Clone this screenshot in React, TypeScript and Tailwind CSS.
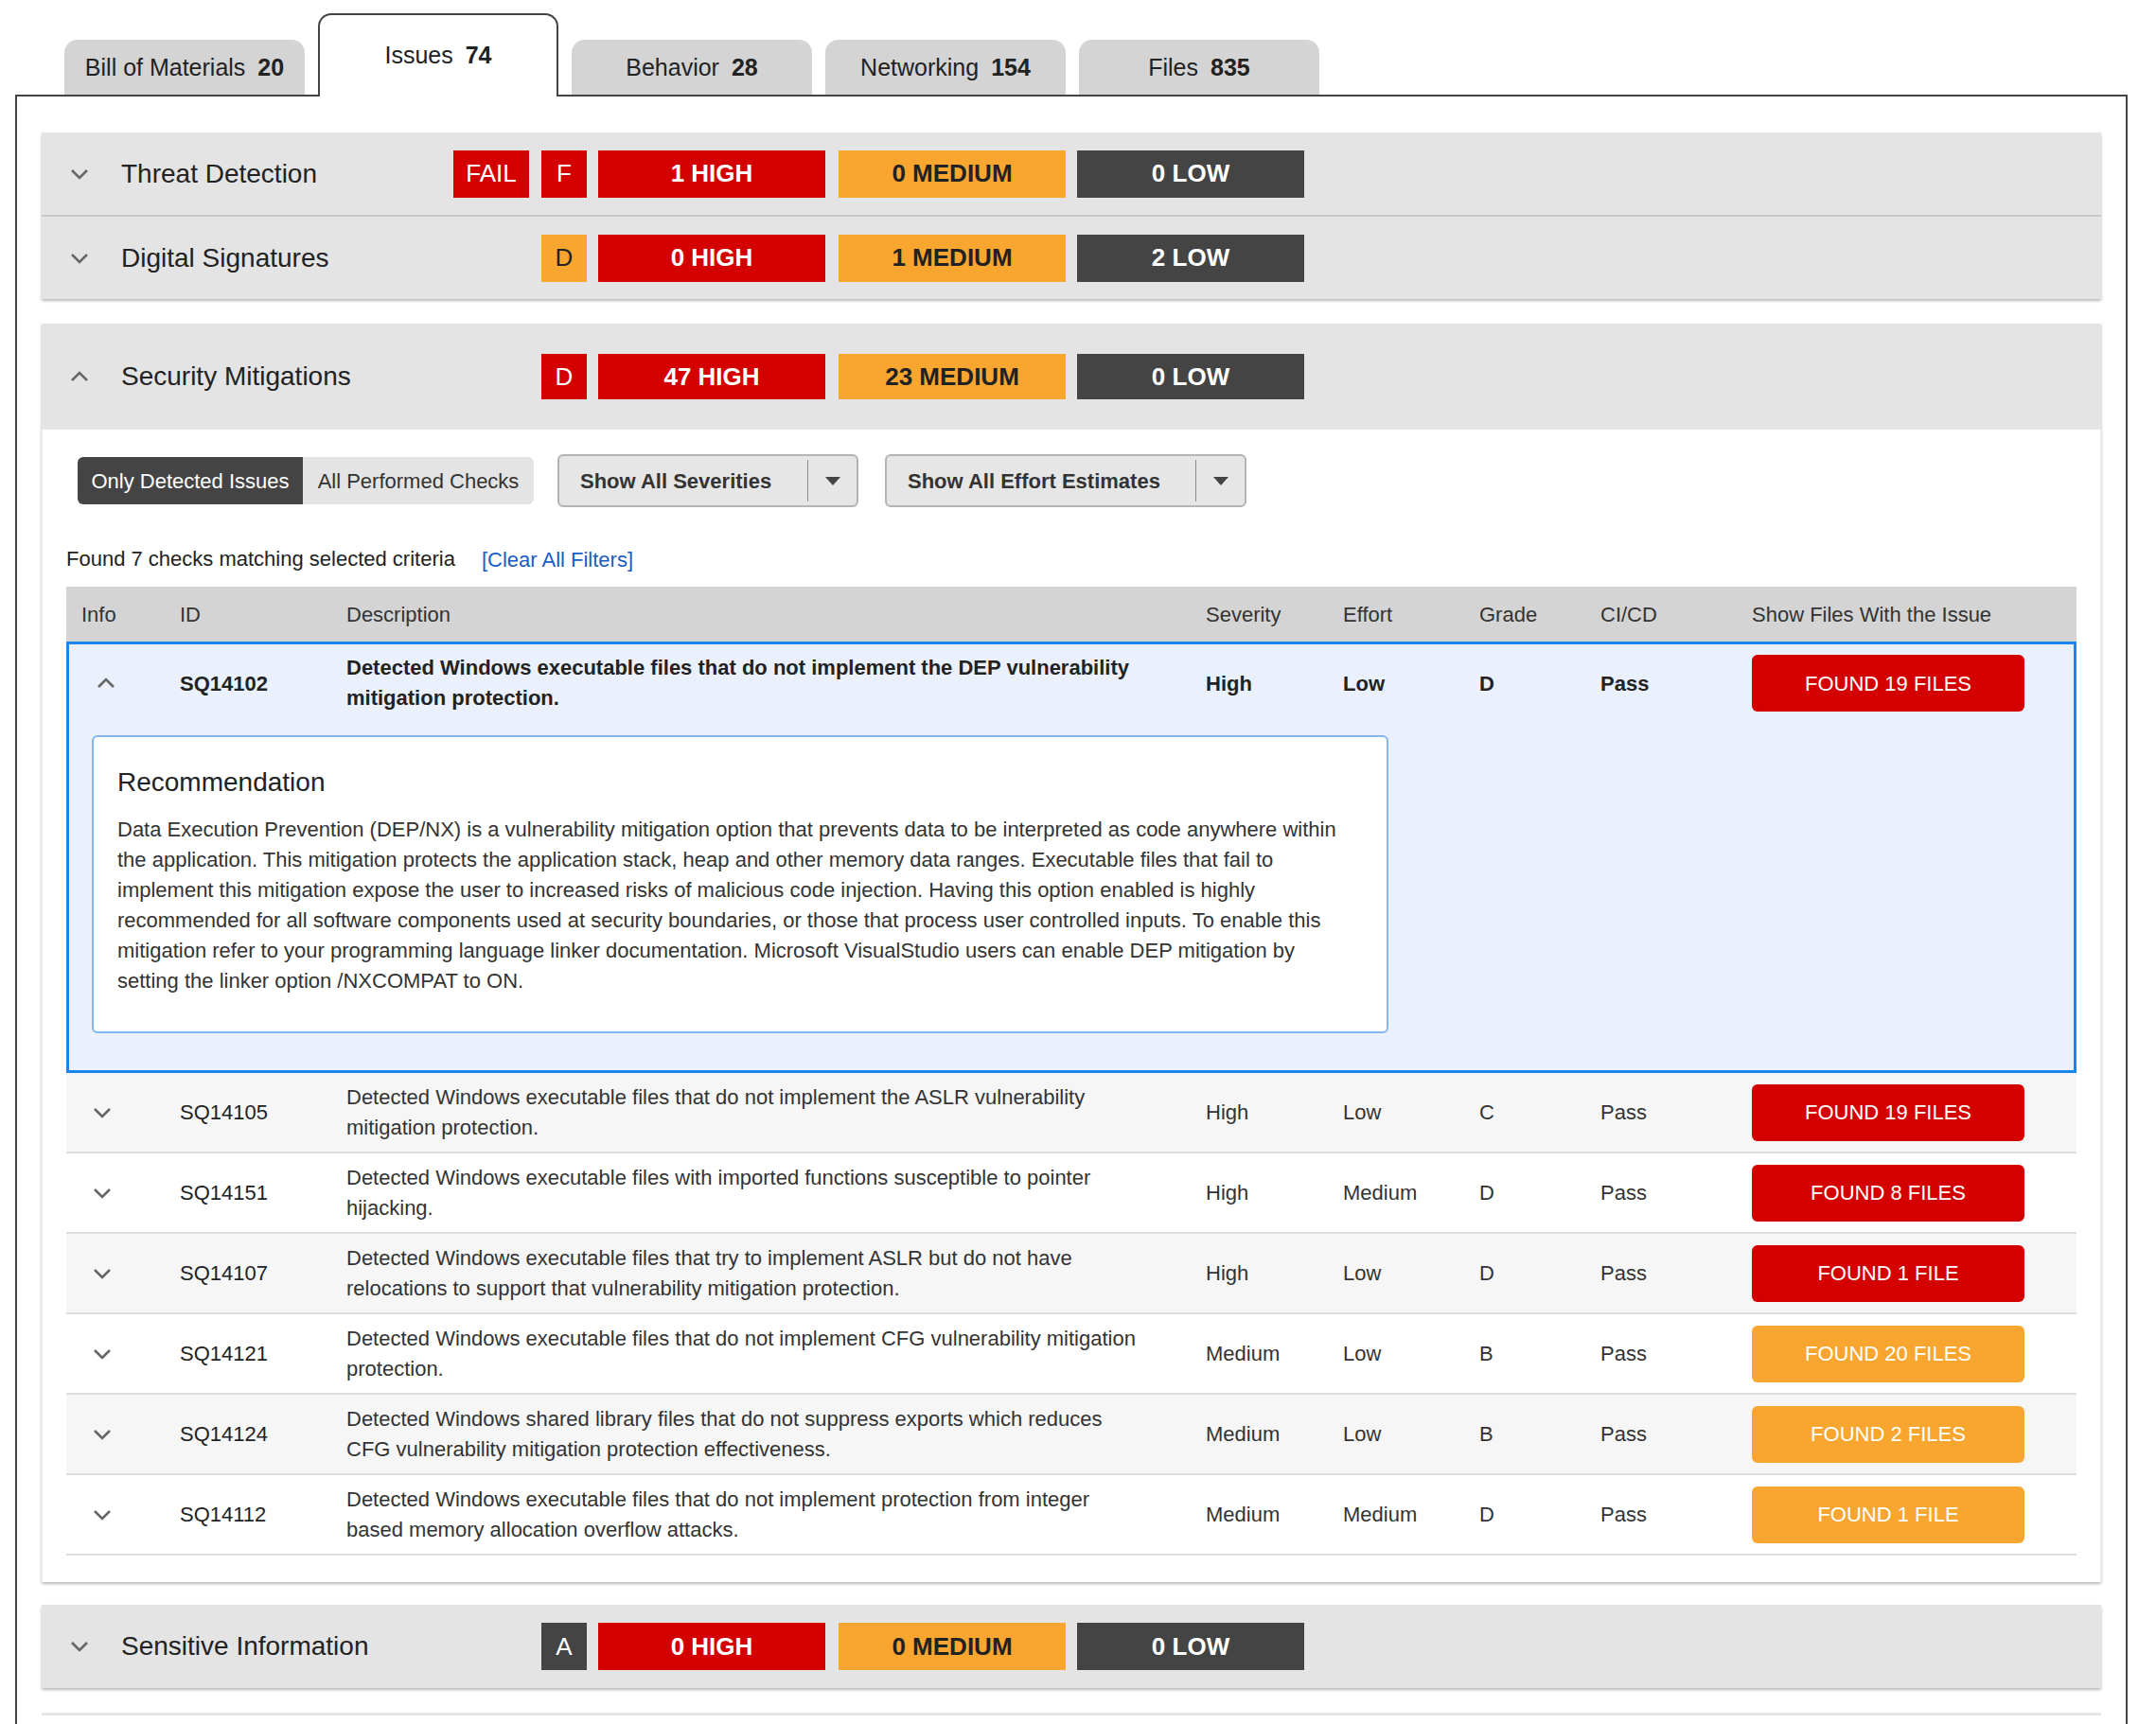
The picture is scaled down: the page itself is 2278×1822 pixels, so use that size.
import React from 'react';

const RED = 'bg-[#d40000]';
const ORANGE = 'bg-[#f9a630]';

type Row = {
  id: string;
  desc: string;
  sev: string;
  effort: string;
  grade: string;
  files: string;
  tone: 'red' | 'orange';
};

const ROWS: Row[] = [
  { id: 'SQ14105', desc: 'Detected Windows executable files that do not implement the ASLR vulnerability mitigation protection.', sev: 'High', effort: 'Low', grade: 'C', files: 'FOUND 19 FILES', tone: 'red' },
  { id: 'SQ14151', desc: 'Detected Windows executable files with imported functions susceptible to pointer hijacking.', sev: 'High', effort: 'Medium', grade: 'D', files: 'FOUND 8 FILES', tone: 'red' },
  { id: 'SQ14107', desc: 'Detected Windows executable files that try to implement ASLR but do not have relocations to support that vulnerability mitigation protection.', sev: 'High', effort: 'Low', grade: 'D', files: 'FOUND 1 FILE', tone: 'red' },
  { id: 'SQ14121', desc: 'Detected Windows executable files that do not implement CFG vulnerability mitigation protection.', sev: 'Medium', effort: 'Low', grade: 'B', files: 'FOUND 20 FILES', tone: 'orange' },
  { id: 'SQ14124', desc: 'Detected Windows shared library files that do not suppress exports which reduces CFG vulnerability mitigation protection effectiveness.', sev: 'Medium', effort: 'Low', grade: 'B', files: 'FOUND 2 FILES', tone: 'orange' },
  { id: 'SQ14112', desc: 'Detected Windows executable files that do not implement protection from integer based memory allocation overflow attacks.', sev: 'Medium', effort: 'Medium', grade: 'D', files: 'FOUND 1 FILE', tone: 'orange' },
];

const GRID = 'grid grid-cols-[104px_176px_908px_145px_144px_128px_160px_1fr]';

function Chevron({ up = false }: { up?: boolean }) {
  return (
    <svg width="20" height="12" viewBox="0 0 20 12" fill="none" stroke="#666" strokeWidth={2.6}>
      {up ? <path d="M2 10 L10 2 L18 10" /> : <path d="M2 2 L10 10 L18 2" />}
    </svg>
  );
}

function Tab({ label, count, active }: { label: string; count: number; active?: boolean }) {
  if (active) {
    return (
      <div className="relative z-10 -mb-[2px] flex h-[88px] w-[254px] items-start justify-center rounded-t-[14px] border-2 border-b-0 border-[#444] bg-white pt-[27px] text-[25px] leading-[30px] text-[#222]">
        <span>{label}</span>
        <b className="ml-[13px]">{count}</b>
      </div>
    );
  }
  return (
    <div className="flex h-[58px] w-[254px] items-center justify-center rounded-t-[14px] bg-[#d4d4d4] text-[25px] leading-[30px] text-[#222]">
      <span>{label}</span>
      <b className="ml-[13px]">{count}</b>
    </div>
  );
}

function Badge({ w, className, children }: { w: string; className: string; children: React.ReactNode }) {
  return <div className={`flex h-full items-center justify-center text-[26px] ${w} ${className}`}>{children}</div>;
}

function SectionHeader({ title, up, fail, grade, gradeTone, high, medium, low, h, badgeH }: {
  title: string; up?: boolean; fail?: boolean; grade: string; gradeTone: string;
  high: number; medium: number; low: number; h: string; badgeH: string;
}) {
  return (
    <div className={`flex items-center ${h}`}>
      <div className="w-[84px] pl-[30px]"><Chevron up={up} /></div>
      <div className="w-[342px] text-[28px] text-[#222]">{title}</div>
      <div className={`flex w-[150px] justify-end gap-[13px] ${badgeH}`}>
        {fail && <Badge w="w-[80px]" className={`${RED} text-white`}>FAIL</Badge>}
        <Badge w="w-[48px]" className={gradeTone}>{grade}</Badge>
      </div>
      <div className={`ml-[12px] flex ${badgeH}`}>
        <Badge w="w-[240px]" className={`${RED} font-bold text-white`}>{high} HIGH</Badge>
        <Badge w="ml-[14px] w-[240px]" className={`${ORANGE} font-bold text-[#222]`}>{medium} MEDIUM</Badge>
        <Badge w="ml-[12px] w-[240px]" className="bg-[#444] font-bold text-white">{low} LOW</Badge>
      </div>
    </div>
  );
}

function Dropdown({ label, w }: { label: string; w: string }) {
  return (
    <div className={`flex h-[56px] items-stretch rounded-[6px] border-2 border-[#b4b4b4] bg-[#e6e6e6] ${w}`}>
      <div className="flex flex-1 items-center pl-[22px] text-[22px] font-bold text-[#333]">{label}</div>
      <div className="my-[4px] w-[1px] bg-[#8a8a8a]" />
      <div className="flex w-[51px] items-center justify-center">
        <div className="h-0 w-0 border-x-[8px] border-t-[9px] border-x-transparent border-t-[#444]" />
      </div>
    </div>
  );
}

function FilesButton({ label, tone }: { label: string; tone: 'red' | 'orange' }) {
  return (
    <div className={`flex h-[60px] w-[288px] items-center justify-center rounded-[6px] text-[22px] text-white ${tone === 'red' ? RED : ORANGE}`}>
      {label}
    </div>
  );
}

export default function App() {
  return (
    <div className="min-h-[1822px] bg-white pb-[40px] text-[#222]" style={{ fontFamily: '"Liberation Sans", Arial, sans-serif' }}>
      {/* tabs */}
      <div className="flex items-end gap-[14px] pl-[68px] pt-[14px]">
        <Tab label="Bill of Materials" count={20} />
        <Tab label="Issues" count={74} active />
        <Tab label="Behavior" count={28} />
        <Tab label="Networking" count={154} />
        <Tab label="Files" count={835} />
      </div>

      <div className="ml-[16px] mr-[30px] border-x-2 border-t-2 border-[#444] px-[26px] pt-[38px]">
        {/* threat + signatures */}
        <div className="bg-[#e4e4e4] shadow-[0_2px_3px_rgba(0,0,0,0.28)]">
          <div className="border-b-2 border-[#c8c8c8]">
            <SectionHeader title="Threat Detection" fail grade="F" gradeTone={`${RED} text-white`} high={1} medium={0} low={0} h="h-[87px]" badgeH="h-[50px]" />
          </div>
          <SectionHeader title="Digital Signatures" grade="D" gradeTone={`${ORANGE} text-[#222]`} high={0} medium={1} low={2} h="h-[87px]" badgeH="h-[50px]" />
        </div>

        {/* security mitigations */}
        <div className="mt-[26px] shadow-[0_2px_3px_rgba(0,0,0,0.28)]">
          <div className="bg-[#e4e4e4]">
            <SectionHeader title="Security Mitigations" up grade="D" gradeTone={`${RED} text-white`} high={47} medium={23} low={0} h="h-[112px]" badgeH="h-[48px]" />
          </div>
          <div className="border-x border-[#ececec] bg-white px-[25px] pb-[28px] pt-[26px]">
            <div className="flex items-center pl-[12px]">
              <div className="flex h-[50px] overflow-hidden rounded-[6px] text-[22px]">
                <div className="flex w-[238px] items-center justify-center bg-[#444] text-white">Only Detected Issues</div>
                <div className="flex w-[244px] items-center justify-center bg-[#e4e4e4] text-[#333]">All Performed Checks</div>
              </div>
              <Dropdown label="Show All Severities" w="ml-[25px] w-[318px]" />
              <Dropdown label="Show All Effort Estimates" w="ml-[28px] w-[382px]" />
            </div>

            <div className="mt-[37px] flex items-center text-[22px] leading-[32px]">
              <span className="text-[#222]">Found 7 checks matching selected criteria</span>
              <span className="ml-[28px] mt-[3px] text-[#1a5cc4]">[Clear All Filters]</span>
            </div>

            {/* table */}
            <div className="mt-[12px] text-[22px]">
              <div className={`${GRID} h-[58px] items-center bg-[#d4d4d4] text-[#333]`}>
                <div className="pl-[16px]">Info</div>
                <div className="pl-[16px]">ID</div>
                <div className="pl-[16px]">Description</div>
                <div className="pl-[16px]">Severity</div>
                <div className="pl-[16px]">Effort</div>
                <div className="pl-[16px]">Grade</div>
                <div className="pl-[16px]">CI/CD</div>
                <div className="pl-[16px]">Show Files With the Issue</div>
              </div>

              {/* expanded row */}
              <div className="bg-[#eaf1fc] pb-[42px] pt-[3px] shadow-[inset_0_0_0_3px_#1a86ec]">
                <div className={`${GRID} h-[82px] items-center font-bold text-[#222]`}>
                  <div className="pl-[32px]"><Chevron up /></div>
                  <div className="pl-[16px]">SQ14102</div>
                  <div className="pl-[16px] pr-[52px] leading-[32px]">Detected Windows executable files that do not implement the DEP vulnerability mitigation protection.</div>
                  <div className="pl-[16px]">High</div>
                  <div className="pl-[16px]">Low</div>
                  <div className="pl-[16px]">D</div>
                  <div className="pl-[16px]">Pass</div>
                  <div className="pl-[16px] font-normal"><FilesButton label="FOUND 19 FILES" tone="red" /></div>
                </div>
                <div className="ml-[27px] mt-[14px] w-[1370px] rounded-[6px] border-2 border-[#82b6ef] bg-white pb-[37px] pl-[25px] pr-[40px] pt-[30px]">
                  <div className="text-[28px] leading-[36px] text-[#222]">Recommendation</div>
                  <p className="mt-[16px] text-[22px] leading-[32px] text-[#333]">
                    Data Execution Prevention (DEP/NX) is a vulnerability mitigation option that prevents data to be interpreted as code anywhere within the application. This mitigation protects the application stack, heap and other memory data ranges. Executable files that fail to implement this mitigation expose the user to increased risks of malicious code injection. Having this option enabled is highly recommended for all software components used at security boundaries, or those that process user controlled inputs. To enable this mitigation refer to your programming language linker documentation. Microsoft VisualStudio users can enable DEP mitigation by setting the linker option /NXCOMPAT to ON.
                  </p>
                </div>
              </div>

              {ROWS.map((r, i) => (
                <div key={r.id} className={`${GRID} h-[85px] items-center border-b-2 border-[#dedede] text-[#333] ${i % 2 === 0 ? 'bg-[#f6f6f6]' : 'bg-white'}`}>
                  <div className="pl-[28px]"><Chevron /></div>
                  <div className="pl-[16px] text-[#222]">{r.id}</div>
                  <div className="pl-[16px] pr-[52px] leading-[32px]">{r.desc}</div>
                  <div className="pl-[16px]">{r.sev}</div>
                  <div className="pl-[16px]">{r.effort}</div>
                  <div className="pl-[16px]">{r.grade}</div>
                  <div className="pl-[16px]">Pass</div>
                  <div className="pl-[16px]"><FilesButton label={r.files} tone={r.tone} /></div>
                </div>
              ))}
            </div>
          </div>
        </div>

        {/* sensitive information */}
        <div className="mt-[24px] bg-[#e4e4e4] shadow-[0_2px_3px_rgba(0,0,0,0.28)]">
          <SectionHeader title="Sensitive Information" grade="A" gradeTone="bg-[#444] text-white" high={0} medium={0} low={0} h="h-[88px]" badgeH="h-[50px]" />
        </div>

        <div className="mt-[26px] h-[3px] bg-[#e6e6e6]" />
        <div className="h-[60px]" />
      </div>
    </div>
  );
}
